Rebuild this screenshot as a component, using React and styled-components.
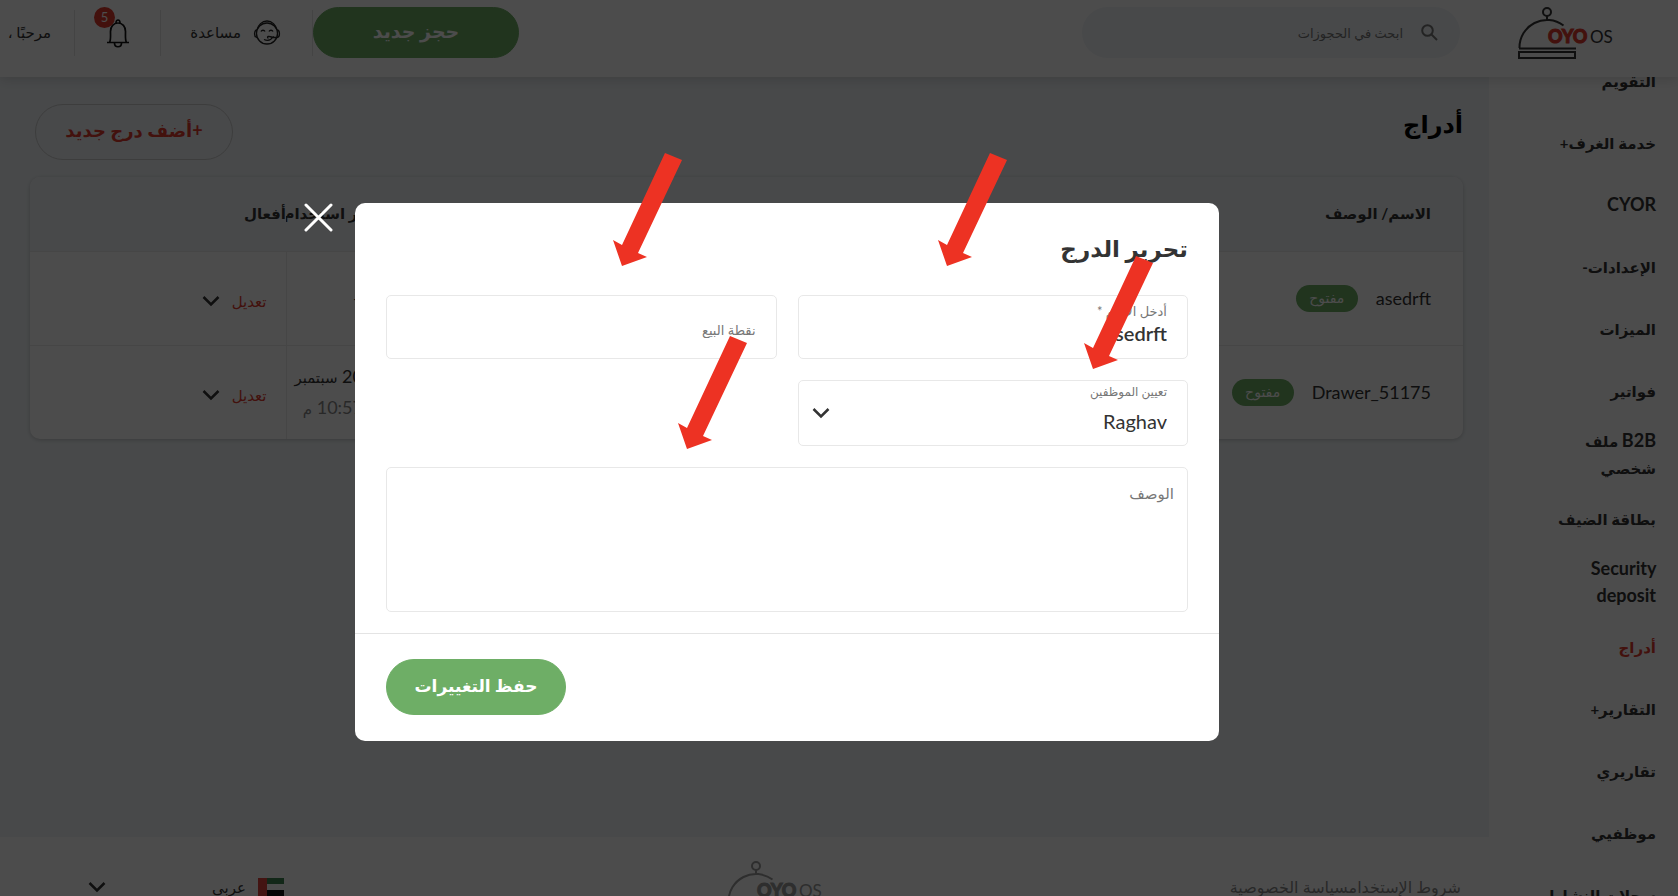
import React, { Component } from "react";
import styled, { createGlobalStyle } from "styled-components";

const GlobalStyle = createGlobalStyle`
  * {
    box-sizing: border-box;
  }

  body {
    margin: 0;
    background: #fff;
    color: #333;
    font-family: Lato, "DejaVu Sans", sans-serif;
    font-size: 16px;
  }

  button, input, select, textarea {
    font-family: inherit;
    color: inherit;
  }
`;

const Page = styled.div`
  display: flex;
  flex-direction: column;
  height: 100vh;
  overflow: hidden;
`;

const Header = styled.header`
  position: relative;
  z-index: 1;
  display: flex;
  flex: none;
  align-items: flex-start;
  height: 77px;
  padding: 7px 64px 0 0;
  background: #fff;
  box-shadow: 0 2px 12px rgba(0, 0, 0, 0.15);
`;

const SearchBox = styled.label`
  display: flex;
  align-items: center;
  gap: 16px;
  width: 378px;
  height: 51px;
  margin-right: 58px;
  padding: 0 22px;
  border-radius: 26px;
  background: #f1f5f8;
  color: #777;
`;

const SearchInput = styled.input`
  flex: 1;
  min-width: 0;
  border: 0;
  outline: 0;
  background: transparent;
  font-size: 13px;

  &::placeholder {
    color: #777;
    opacity: 1;
  }
`;

const HeaderActions = styled.div`
  display: flex;
  align-items: center;
  height: 51px;
  margin-right: auto;
`;

const PillButton = styled.button`
  height: ${props => props.$height}px;
  min-width: ${props => props.$width}px;
  padding: 0 24px 4px;
  border: 1px solid ${props => (props.$outline ? "#ccc" : "#6eae66")};
  border-radius: 28px;
  background: ${props => (props.$outline ? "transparent" : "#6eae66")};
  color: ${props => (props.$outline ? "#e03a2e" : "#fff")};
  font-size: ${props => props.$size || 17}px;
  font-weight: 700;
  white-space: nowrap;
`;

const HeaderItem = styled.button`
  position: relative;
  display: flex;
  align-items: center;
  justify-content: ${props => props.$align || "center"};
  gap: 12px;
  width: ${props => props.$width}px;
  height: 46px;
  padding: ${props => props.$padding || "0"};
  border: 0;
  border-right: 1px solid #e4e4e4;
  background: transparent;
  font-size: 15px;
  white-space: nowrap;
`;

const Count = styled.span`
  position: absolute;
  top: -3px;
  left: 19px;
  width: 21px;
  height: 21px;
  border-radius: 50%;
  background: #e03a2e;
  color: #fff;
  font-size: 13px;
  line-height: 20px;
  text-align: center;
`;

const Body = styled.div`
  display: flex;
  flex: 1;
  min-height: 0;
`;

const Sidebar = styled.aside`
  flex: none;
  width: 189px;
  overflow: hidden;
`;

/* the menu is scrolled down a little under the header */
const Nav = styled.nav`
  display: flex;
  flex-direction: column;
  margin-top: -27px;
  padding: 0 22px 0 52px;
`;

const NavLink = styled.a`
  display: flex;
  flex: none;
  align-items: center;
  min-height: 62px;
  padding: 6px 0;
  color: ${props => (props.$active ? "#e03a2e" : "#333")};
  font-size: 15px;
  font-weight: 700;
  line-height: 27px;
  text-decoration: none;
`;

const Latin = styled.span`
  font-size: 18px;
  line-height: 18px;
`;

const Main = styled.div`
  display: flex;
  flex: 1;
  flex-direction: column;
  min-width: 0;
`;

const Content = styled.main`
  flex: none;
  height: calc(100vh - 136px);
  padding: 27px 26px 0 30px;
  background: #f1f5f8;
`;

const TitleBar = styled.div`
  display: flex;
  align-items: flex-start;
  justify-content: space-between;
  padding-left: 5px;
`;

const Title = styled.h1`
  margin: 0;
  color: #000;
  font-size: 24px;
  line-height: 40px;
`;

const Card = styled.div`
  margin-top: 17px;
  overflow: hidden;
  border-radius: 10px;
  background: #fff;
  box-shadow: 0 1px 4px rgba(0, 0, 0, 0.2);
`;

const Table = styled.table`
  width: 100%;
  border-collapse: collapse;
  table-layout: fixed;
`;

const HeadCell = styled.th`
  width: ${props => props.$width || "auto"};
  height: 74px;
  padding: 0 ${props => props.$start}px 0 0;
  overflow: hidden;
  background: #f1f5f8;
  font-size: 15px;
  text-align: right;
  white-space: nowrap;
`;

const Cell = styled.td`
  height: 94px;
  padding: 0 ${props => props.$start}px 0 0;
  border-top: 1px solid #ececec;
  border-right: ${props => (props.$divided ? "1px solid #ececec" : "0")};
  font-size: 18px;
  white-space: nowrap;
`;

const CellRow = styled.div`
  display: flex;
  align-items: center;
  gap: ${props => props.$gap}px;
  padding-top: ${props => props.$top || 0}px;
`;

const Badge = styled.span`
  min-width: 62px;
  height: 27px;
  padding: 0 12px;
  border-radius: 14px;
  background: #6eae66;
  color: #fff;
  font-size: 14px;
  line-height: 26px;
  text-align: center;
`;

const DateLine = styled.div`
  font-size: 18px;
  line-height: 30px;
  color: ${props => (props.$muted ? "#888" : "#333")};

  small {
    font-size: 15px;
  }
`;

const EditLink = styled.a`
  color: #e03a2e;
  font-size: 15px;
  line-height: 28px;
  text-decoration: none;
`;

const Footer = styled.footer`
  display: grid;
  grid-template-columns: 1fr auto 1fr;
  align-items: start;
  padding: 24px 28px 0 88px;
  color: #888;
`;

const FooterLinks = styled.div`
  padding-top: 14px;
  font-size: 16px;
  line-height: 24px;
  white-space: nowrap;

  a {
    color: inherit;
    text-decoration: none;
  }
`;

const Language = styled.button`
  display: flex;
  align-items: center;
  justify-self: end;
  gap: 12px;
  width: 196px;
  margin-top: 14px;
  padding: 0;
  border: 0;
  background: transparent;
  color: #333;
  font-size: 15px;
  line-height: 24px;

  svg:last-child {
    margin-right: auto;
  }
`;

const Backdrop = styled.div`
  position: fixed;
  inset: 0;
  z-index: 2;
  display: flex;
  align-items: center;
  justify-content: center;
  padding: 48px 104px 0 0;
  background: rgba(0, 0, 0, 0.7);
`;

const Modal = styled.div`
  position: relative;
  width: 864px;
  border-radius: 10px;
  background: #fff;
`;

const CloseButton = styled.button`
  position: absolute;
  top: 0;
  left: -52px;
  padding: 0;
  border: 0;
  background: transparent;
  line-height: 0;
`;

const Form = styled.form`
  display: grid;
  grid-template-columns: 1fr 1fr;
  gap: 21px;
  padding: 25px 31px 21px;
`;

const FormTitle = styled.h2`
  grid-column: 1 / -1;
  margin: 0;
  padding-bottom: 6px;
  font-size: 23px;
  line-height: 40px;
`;

const Field = styled.div`
  position: relative;
  display: flex;
  flex-direction: column;
  justify-content: center;
  height: ${props => props.$height}px;
  padding: ${props => props.$padding};
  border: 1px solid #e8e8e8;
  border-radius: 5px;

  svg {
    position: absolute;
    top: 26px;
    left: 13px;
    pointer-events: none;
  }
`;

const Label = styled.label`
  color: #777;
  font-size: ${props => props.$size || 13}px;
  line-height: 20px;
`;

const Input = styled.input`
  width: 100%;
  height: ${props => props.$height || 24}px;
  padding: 0;
  border: 0;
  outline: 0;
  background: transparent;
  font-size: ${props => (props.$height ? 13 : 20)}px;
  font-weight: 600;

  &::placeholder {
    color: #777;
    font-weight: 400;
    opacity: 1;
  }
`;

const Select = styled.select`
  width: 100%;
  height: 38px;
  padding: 0;
  border: 0;
  outline: 0;
  appearance: none;
  background: transparent;
  font-size: 20px;
`;

const TextArea = styled.textarea`
  grid-column: 1 / -1;
  display: block;
  width: 100%;
  height: 145px;
  padding: 13px;
  border: 1px solid #e8e8e8;
  border-radius: 5px;
  outline: 0;
  resize: none;
  font-size: 15px;
  line-height: 24px;

  &::placeholder {
    color: #777;
    opacity: 1;
  }
`;

const ModalFooter = styled.div`
  display: flex;
  justify-content: flex-end;
  padding: 25px 31px 26px;
  border-top: 1px solid #e4e4e4;
`;

const Pointer = styled.svg`
  position: absolute;
  top: ${props => props.$top}px;
  left: ${props => props.$left}px;
  pointer-events: none;
`;

const NAV = [
  { text: "التقويم" },
  { text: "خدمة الغرف+" },
  { latin: "CYOR" },
  { text: "الإعدادات-" },
  { text: "الميزات" },
  { text: "فواتير" },
  { latin: "B2B", text: " ملف شخصي" },
  { text: "بطاقة الضيف" },
  { latin: "Security deposit" },
  { text: "أدراج", active: true },
  { text: "التقارير+" },
  { text: "تقاريري" },
  { text: "موظفيي" },
  { text: "سجلات النشاط" }
];

const DRAWERS = [
  { name: "asedrft", day: "", time: "" },
  { name: "Drawer_51175", day: "20", time: "10:57" }
];

const POINTERS = [
  { left: 257, top: -51 },
  { left: 582, top: -51 },
  { left: 322, top: 132 },
  { left: 728, top: 52 }
];

const Logo = ({ ink, accent }) => (
  <svg width="96" height="52" viewBox="0 0 96 52" direction="ltr">
    <g fill="none" stroke={ink} strokeWidth="2">
      <circle cx="29" cy="5" r="4" />
      <path d="M29 9v4M1.500 41a27.500 27.500 0 0 1 44-22.500M1 41.500h57" />
      <rect x="1" y="45" width="56" height="6" />
    </g>
    <text x="30" y="36" fill={accent} fontFamily="Lato" fontSize="18" fontWeight="900" stroke={accent}>
      OYO
    </text>
    <text x="72" y="36" fill={ink} fontFamily="Lato" fontSize="17">
      OS
    </text>
  </svg>
);

const Chevron = () => (
  <svg width="18" height="12" viewBox="0 0 18 12">
    <path d="M1.500 2l7.500 7.500L16.500 2" fill="none" stroke="#333" strokeWidth="2.500" />
  </svg>
);

const SearchIcon = () => (
  <svg width="17" height="17" viewBox="0 0 17 17" fill="none" stroke="#777" strokeWidth="2">
    <circle cx="6.500" cy="6.500" r="5.300" />
    <path d="M10.500 10.500l5.500 5.500" />
  </svg>
);

const HelpIcon = () => (
  <svg width="28" height="26" viewBox="0 0 28 26" fill="none" stroke="#222" strokeWidth="1.300">
    <circle cx="14" cy="13.500" r="10.500" />
    <path d="M4 10C5 5 9 1 14 1s9 4 10 9M4 10c-3 0-3.500 7 0 7.500M24 10c3 0 3.500 7 0 7.500h-4" />
    <path d="M8 11.500c.8-1.700 3.200-1.700 4 0M16 11.500c.8-1.700 3.200-1.700 4 0M11 19.500c3.500 1.500 7 .5 9-2.500-2 .3-3-.8-5-.5-.8.800-.5 1.500.5 1.500" />
  </svg>
);

const BellIcon = () => (
  <svg width="24" height="30" viewBox="0 0 24 30" fill="none" stroke="#111" strokeWidth="1.700">
    <path d="M1 24.500h22M3.500 24.500c1.500-2.500 1-6 1-11C4.500 8.500 7.500 5 12 5s7.500 3.500 7.500 8.500c0 5-.5 8.500 1 11" />
    <path d="M10 5c0-4 4-4 4 0M8.500 25c0 5 7 5 7 0" />
  </svg>
);

const Flag = () => (
  <svg width="26" height="19" viewBox="0 0 26 19">
    <path fill="#fff" d="M0 0h26v19H0z" />
    <path fill="#3f8450" d="M9 0h17v6H9z" />
    <path fill="#111" d="M9 12h17v7H9z" />
    <path fill="#e0443e" d="M0 0h9v19H0z" />
  </svg>
);

class EditDrawer extends Component {
  state = { name: "asedrft", pos: "", about: "" };

  handleChange = event => {
    this.setState({ [event.target.name]: event.target.value });
  };

  render() {
    const { name, pos, about } = this.state;

    return (
      <Modal role="dialog" aria-labelledby="edit-title">
        <CloseButton type="button" aria-label="إغلاق">
          <svg width="30" height="29" viewBox="0 0 30 29">
            <path d="M3 2l25 25M28 2L3 27" stroke="#fff" strokeWidth="3" strokeLinecap="round" />
          </svg>
        </CloseButton>
        <Form id="drawer-form">
          <FormTitle id="edit-title">تحرير الدرج</FormTitle>
          <Field $height={64} $padding="0 20px 9px">
            <Label htmlFor="name">أدخل الاسم *</Label>
            <Input id="name" name="name" value={name} onChange={this.handleChange} />
          </Field>
          <Field $height={64} $padding="6px 20px 0">
            <Input
              $height={54}
              name="pos"
              aria-label="نقطة البيع"
              placeholder="نقطة البيع"
              value={pos}
              onChange={this.handleChange}
            />
          </Field>
          <Field $height={66} $padding="0 20px 4px">
            <Label htmlFor="staff" $size={12}>تعيين الموظفين</Label>
            <Select id="staff">
              <option>Raghav</option>
            </Select>
            <Chevron />
          </Field>
          <TextArea
            name="about"
            aria-label="الوصف"
            placeholder="الوصف"
            value={about}
            onChange={this.handleChange}
          />
        </Form>
        <ModalFooter>
          <PillButton type="button" $height={56} $width={180}>
            حفظ التغييرات
          </PillButton>
        </ModalFooter>
        {POINTERS.map(p => (
          <Pointer key={p.left} $left={p.left} $top={p.top} width="71" height="115">
            <path fill="#ed3223" d="M53 1L70 8 26 101 35 105 10 114 1 88 10 93z" />
          </Pointer>
        ))}
      </Modal>
    );
  }
}

const App = () => (
  <Page dir="rtl" lang="ar">
    <GlobalStyle />
    <Header>
      <Logo ink="#333" accent="#e03a2e" />
      <SearchBox>
        <SearchIcon />
        <SearchInput placeholder="ابحث في الحجوزات" aria-label="ابحث في الحجوزات" />
      </SearchBox>
      <HeaderActions>
        <PillButton $height={51} $width={206} $size={19}>
          حجز جديد
        </PillButton>
        <HeaderItem $width={152} $align="flex-start" $padding="0 31px 0 0">
          <HelpIcon />
          مساعدة
        </HeaderItem>
        <HeaderItem $width={86} aria-label="5">
          <BellIcon />
          <Count>5</Count>
        </HeaderItem>
        <HeaderItem $width={75} $align="flex-start" $padding="0 23px 0 0">
          مرحبًا ،
        </HeaderItem>
      </HeaderActions>
    </Header>
    <Body>
      <Sidebar>
        <Nav>
          {NAV.map(item => (
            <NavLink key={item.text || item.latin} href="#" $active={item.active}>
              <span>
                {item.latin && <Latin>{item.latin}</Latin>}
                {item.text}
              </span>
            </NavLink>
          ))}
        </Nav>
      </Sidebar>
      <Main>
        <Content>
          <TitleBar>
            <Title>أدراج</Title>
            <PillButton $outline $height={56} $width={198} $size={18}>
              +أضف درج جديد
            </PillButton>
          </TitleBar>
          <Card>
            <Table>
              <thead>
                <tr>
                  <HeadCell $start={32}>الاسم/ الوصف</HeadCell>
                  <HeadCell $start={7} $width="95px">آخر استخدام</HeadCell>
                  <HeadCell $start={0} $width="256px">أفعال</HeadCell>
                </tr>
              </thead>
              <tbody>
                {DRAWERS.map(drawer => (
                  <tr key={drawer.name}>
                    <Cell $start={32}>
                      <CellRow $gap={18}>
                        {drawer.name}
                        <Badge>مفتوح</Badge>
                      </CellRow>
                    </Cell>
                    <Cell $start={18}>
                      {drawer.day ? (
                        <React.Fragment>
                          <DateLine>
                            {drawer.day} <small>سبتمبر</small>
                          </DateLine>
                          <DateLine $muted>
                            {drawer.time} <small>م</small>
                          </DateLine>
                        </React.Fragment>
                      ) : (
                        "–"
                      )}
                    </Cell>
                    <Cell $start={19} $divided>
                      <CellRow $gap={12} $top={6}>
                        <EditLink href="#">تعديل</EditLink>
                        <Chevron />
                      </CellRow>
                    </Cell>
                  </tr>
                ))}
              </tbody>
            </Table>
          </Card>
        </Content>
        <Footer>
          <FooterLinks>
            <a href="#">شروط الإستخدام</a>
            <a href="#">سياسة الخصوصية</a>
          </FooterLinks>
          <Logo ink="#999" accent="#999" />
          <Language>
            <Flag />
            عربي
            <Chevron />
          </Language>
        </Footer>
      </Main>
    </Body>
    <Backdrop>
      <EditDrawer />
    </Backdrop>
  </Page>
);

export default App;
